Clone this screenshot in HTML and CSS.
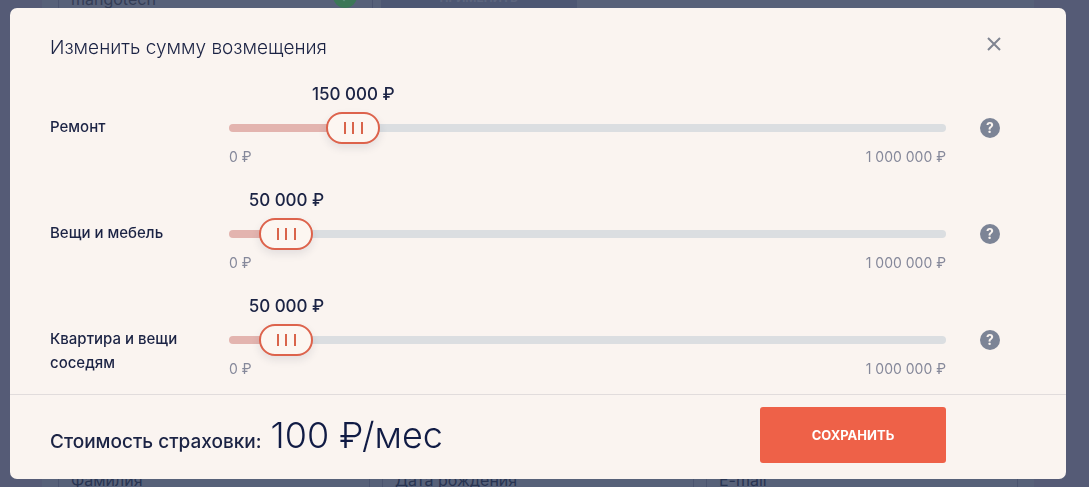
FILE: index.html
```
<!DOCTYPE html>
<html lang="ru">
<head>
    <meta charset="UTF-8">
    <meta name="viewport" content="width=device-width, initial-scale=1.0">
    <title>Изменить сумму возмещения</title>
    <link rel="stylesheet" href="styles.css">
</head>
<body>
    <main class="page" inert>
        <form class="order">
            <div class="coupon">
                <div class="coupon-field">
                    <input type="text" value="mangotech" aria-label="Промокод">
                    <svg class="coupon-ok" viewBox="0 0 24 24" aria-hidden="true">
                        <circle cx="12" cy="12" r="12" fill="#3c7757"/>
                        <path d="M7 12l4 4 7-8" fill="none" stroke="#5f8f7c" stroke-width="2"/>
                    </svg>
                </div>
                <button type="button" class="coupon-button">Применить</button>
            </div>
            <div class="person">
                <input type="text" placeholder="Фамилия" aria-label="Фамилия">
                <input type="text" placeholder="Дата рождения" aria-label="Дата рождения">
                <input type="email" placeholder="E-mail" aria-label="E-mail">
            </div>
        </form>
    </main>

    <div class="overlay">
        <section class="modal" role="dialog" aria-modal="true" aria-labelledby="modal-title">
            <header class="modal-header">
                <h1 id="modal-title">Изменить сумму возмещения</h1>
                <button type="button" class="close" aria-label="Закрыть">
                    <svg viewBox="0 0 14 14" width="14" height="14" aria-hidden="true">
                        <path d="M1 1l12 12M13 1L1 13" fill="none" stroke="#7f8491" stroke-width="2"/>
                    </svg>
                </button>
            </header>

            <div class="limits">
                <div class="limit">
                    <label for="repair">Ремонт</label>
                    <div class="slider" style="--value: 0.15">
                        <output for="repair">150 000 ₽</output>
                        <div class="track">
                            <input type="range" id="repair" min="0" max="1000000" step="10000" value="150000">
                        </div>
                        <div class="range-ends"><span>0 ₽</span><span>1 000 000 ₽</span></div>
                    </div>
                    <button type="button" class="help" aria-label="Подсказка: ремонт">?</button>
                </div>
                <div class="limit">
                    <label for="things">Вещи и мебель</label>
                    <div class="slider" style="--value: 0.05">
                        <output for="things">50 000 ₽</output>
                        <div class="track">
                            <input type="range" id="things" min="0" max="1000000" step="10000" value="50000">
                        </div>
                        <div class="range-ends"><span>0 ₽</span><span>1 000 000 ₽</span></div>
                    </div>
                    <button type="button" class="help" aria-label="Подсказка: вещи и мебель">?</button>
                </div>
                <div class="limit">
                    <label for="neighbours">Квартира и вещи соседям</label>
                    <div class="slider" style="--value: 0.05">
                        <output for="neighbours">50 000 ₽</output>
                        <div class="track">
                            <input type="range" id="neighbours" min="0" max="1000000" step="10000" value="50000">
                        </div>
                        <div class="range-ends"><span>0 ₽</span><span>1 000 000 ₽</span></div>
                    </div>
                    <button type="button" class="help" aria-label="Подсказка: квартира и вещи соседям">?</button>
                </div>
            </div>

            <footer class="modal-footer">
                <p class="price">Стоимость страховки: <strong id="price">100 ₽/мес</strong></p>
                <button type="button" class="save">Сохранить</button>
            </footer>
        </section>
    </div>

    <script>
        // Keep the amount and the filled part in step with the handle
        document.querySelectorAll(".slider").forEach((slider) => {
            const input = slider.querySelector("input");
            const output = slider.querySelector("output");

            input.addEventListener("input", () => {
                slider.style.setProperty("--value", input.value / input.max);
                output.textContent = input.value.replace(/\B(?=(\d{3})+$)/g, " ") + " ₽";
            });
        });
    </script>
</body>
</html>
```

FILE: styles.css
```
* {
    box-sizing: border-box;
}
body {
    margin: 0;
    height: 100vh;
    overflow: hidden;
    background: #555b76;
    color: #1b2344;
    font-family: Inter, "Noto Sans", sans-serif;
}
button,
input {
    font-family: inherit;
}
button {
    border: none;
    padding: 0;
    cursor: pointer;
}

/* Page under the dialog, scrolled part way down */
.page {
    height: 100vh;
    padding: 0 55px 0 42px;
    overflow: hidden;
}
.order {
    display: flex;
    flex-direction: column;
    justify-content: space-between;
    height: calc(100vh + 41px);
    margin-top: -24px;
    padding: 0 16px;
    background: #576179;
}
.coupon,
.person {
    display: grid;
    grid-template-columns: repeat(3, 1fr);
    gap: 12px;
}
.coupon {
    gap: 8px;
}
.order input {
    width: 100%;
    height: 48px;
    padding: 0 12px;
    border: 1px solid #4b546f;
    background: transparent;
    color: #333c55;
    font-size: 16px;
}
.coupon .coupon-field input {
    height: 46px;
}
.order input::placeholder {
    color: #283451;
    opacity: 1;
}
.coupon-field {
    position: relative;
}
.coupon-ok {
    position: absolute;
    top: 8px;
    right: 16px;
    width: 24px;
    height: 24px;
}
.coupon-button {
    width: 196px;
    padding-bottom: 4px;
    background: #4d5773;
    color: #5c657e;
    font-size: 12px;
    font-weight: 700;
    text-transform: uppercase;
}

/* Dialog */
.overlay {
    position: fixed;
    inset: 0;
    padding: 8px 23px 8px 10px;
}
.modal {
    display: flex;
    flex-direction: column;
    height: 100%;
    border-radius: 7px;
    background: #faf4f0;
    overflow: hidden;
}
.modal-header {
    display: flex;
    align-items: center;
    justify-content: space-between;
    padding: 24px 60px 12px 40px;
}
h1 {
    margin: 0;
    font-size: 19px;
    font-weight: 300;
    line-height: 32px;
}
.close {
    display: flex;
    align-items: center;
    justify-content: center;
    width: 24px;
    height: 24px;
    margin-bottom: 8px;
    background: none;
}

/* Sliders */
.limits {
    flex: 1;
    display: flex;
    flex-direction: column;
    gap: 23px;
    padding: 8px 66px 0 40px;
    overflow: hidden;
}
.limit {
    display: grid;
    grid-template-columns: 145px 1fr 20px;
    column-gap: 34px;
    align-items: start;
}
.limit label {
    padding-top: 31px;
    font-size: 15px;
    font-weight: 500;
    line-height: 24px;
}
.slider output {
    display: block;
    width: fit-content;
    margin-left: calc(24px + (100% - 48px) * var(--value));
    transform: translateX(-50%);
    font-size: 17px;
    font-weight: 500;
    line-height: 20px;
    white-space: nowrap;
}
.track {
    display: flex;
    align-items: center;
    height: 8px;
    margin: 20px 0 15px;
    border-radius: 4px;
    background: linear-gradient(#e3b4af, #e3b4af) no-repeat #dbdee1;
    background-size: calc(24px + (100% - 48px) * var(--value)) 100%;
}
.track input {
    appearance: none;
    flex: 1;
    height: 32px;
    margin: 0 -3px;
    background: none;
    cursor: pointer;
}
.track input::-webkit-slider-thumb {
    appearance: none;
    width: 54px;
    height: 32px;
    border: 2px solid #dd634c;
    border-radius: 16px;
    background:
        linear-gradient(#d9644b, #d9644b) 16px center / 2px 12px no-repeat,
        linear-gradient(#d9644b, #d9644b) 24px center / 2px 12px no-repeat,
        linear-gradient(#d9644b, #d9644b) 33px center / 2px 12px no-repeat,
        #fcf6f1;
    box-shadow: 0 4px 8px rgba(27, 35, 68, 0.1);
}
.range-ends {
    display: flex;
    justify-content: space-between;
    color: #85889a;
    font-size: 14px;
    line-height: 20px;
}
.help {
    width: 20px;
    height: 20px;
    margin-top: 34px;
    border-radius: 50%;
    background: #7c8496;
    color: #faf4f0;
    font-size: 14px;
    font-weight: 700;
    line-height: 20px;
}

/* Footer */
.modal-footer {
    display: flex;
    align-items: center;
    justify-content: space-between;
    padding: 12px 120px 16px 40px;
    border-top: 1px solid #e1dcdc;
}
.price {
    margin: 0;
    font-size: 19px;
    font-weight: 500;
}
.price strong {
    margin-left: 4px;
    color: #101b44;
    font-size: 36px;
    font-weight: 300;
}
.save {
    width: 186px;
    height: 56px;
    border-radius: 3px;
    background: #ee6148;
    color: #fff;
    font-size: 13px;
    font-weight: 700;
    text-transform: uppercase;
}
```
